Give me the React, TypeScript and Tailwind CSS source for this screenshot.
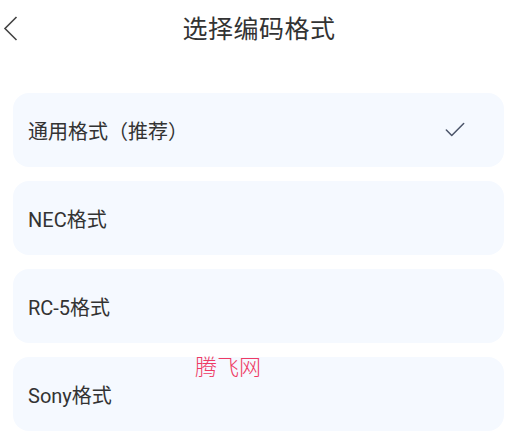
import { Check } from 'lucide-react'

const FORMATS = ['通用格式（推荐）', 'NEC格式', 'RC-5格式', 'Sony格式']

export default function App() {
  const selected = 0

  return (
    <div
      className="relative w-[512px] h-[433px] overflow-hidden bg-white text-[#333333]"
      style={{ fontFamily: 'Roboto, "Noto Sans CJK SC", sans-serif' }}
    >
      <header className="relative flex items-center justify-center h-[60px] pl-[6px]">
        <button className="absolute left-[3px] top-[16px] w-[15px] h-[25px] text-[#444]">
          <svg viewBox="0 0 15 25" width="15" height="25" fill="none" stroke="currentColor" strokeWidth="1.6">
            <path d="M13.5 1 L2 12.5 L13.5 24" />
          </svg>
        </button>
        <h1 className="text-[25px] leading-none tracking-[0.5px] -mt-[1px]">选择编码格式</h1>
      </header>

      <ul className="flex flex-col gap-[14px] mt-[33px] ml-[13px] mr-[8px]">
        {FORMATS.map((name, i) => (
          <li
            key={name}
            className="flex items-center justify-between h-[74px] rounded-[16px] bg-[#f5f9ff] pl-[15px] pr-[36px]"
          >
            <span className="text-[20px] leading-none pt-[3px]">{name}</span>
            {i === selected && <Check size={26} strokeWidth={1.4} className="text-[#4b5469]" />}
          </li>
        ))}
      </ul>

      <span
        className="absolute left-[195px] top-[354px] text-[22px] leading-none text-[#ee3a64] font-light"
        style={{ fontFamily: '"Noto Sans CJK SC", sans-serif' }}
      >
        腾飞网
      </span>
    </div>
  )
}
